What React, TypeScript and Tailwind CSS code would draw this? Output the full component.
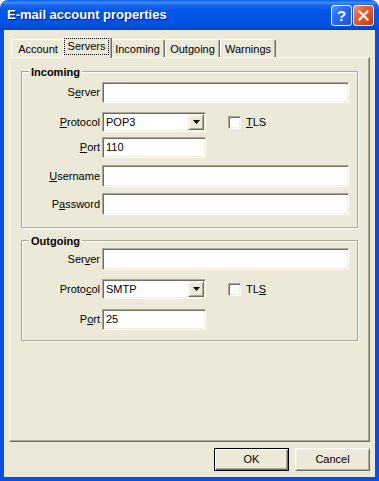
import React from "react";

/* ================= PIECES ================= */

const sunken =
  "border border-t-[#ACA899] border-l-[#ACA899] border-b-white border-r-white shadow-[inset_1px_1px_0_#716F64,inset_-1px_-1px_0_#F1EFE2]";

function Edit({ w, h, value, className = "" }: { w: string; h: string; value?: string; className?: string }) {
  return (
    <div className={`${w} ${h} ${sunken} bg-white flex items-center pl-[3px] ${className}`}>
      {value}
    </div>
  );
}

function Combo({ value, className = "" }: { value: string; className?: string }) {
  return (
    <div className={`w-[104px] h-[20px] ${sunken} bg-white flex items-stretch p-[1px] ${className}`}>
      <div className="flex-1 flex items-center pl-[2px]">{value}</div>
      <div className="w-[16px] bg-[#ECE9D8] border border-t-[#F1EFE2] border-l-[#F1EFE2] border-b-[#716F64] border-r-[#716F64] shadow-[inset_1px_1px_0_#fff,inset_-1px_-1px_0_#ACA899] flex items-center justify-center">
        <svg width="7" height="4" viewBox="0 0 7 4">
          <path d="M0 0h7L3.5 4z" fill="#000" />
        </svg>
      </div>
    </div>
  );
}

function Check({ label }: { label: React.ReactNode }) {
  return (
    <div className="flex items-center ml-[22px]">
      <div className={`w-[13px] h-[13px] ${sunken} bg-white`} />
      <span className="ml-[5px]">{label}</span>
    </div>
  );
}

function Row({ label, children, className = "" }: { label: React.ReactNode; children: React.ReactNode; className?: string }) {
  return (
    <div className={`flex items-center ${className}`}>
      <div className="w-[78px] text-right">{label}</div>
      <div className="ml-[2px] flex items-center">{children}</div>
    </div>
  );
}

function Group({ title, children, className = "" }: { title: string; children: React.ReactNode; className?: string }) {
  return (
    <div
      className={`relative ml-[11px] w-[337px] border border-[#ACA899] shadow-[inset_1px_1px_0_#fff,1px_1px_0_#fff] flex flex-col ${className}`}
    >
      <span className="absolute -top-[6px] left-[7px] px-[2px] bg-[#ECE9D8] font-bold leading-[13px]">
        {title}
      </span>
      {children}
    </div>
  );
}

const U = ({ children }: { children: React.ReactNode }) => <span className="underline underline-offset-[1px]">{children}</span>;

function Tab({ label, w, selected }: { label: string; w: string; selected?: boolean }) {
  if (selected) {
    return (
      <div
        className={`${w} h-[21px] -mx-[2px] -mb-px relative z-10 bg-[#ECE9D8] rounded-t-[2px] border-l border-t border-r border-l-white border-t-white border-r-[#716F64] shadow-[inset_-1px_0_0_#ACA899] flex`}
      >
        <div className="mt-[0px] ml-[0px] mr-[2px] h-[17px] flex-1 border border-dotted border-black flex items-center justify-center">
          {label}
        </div>
      </div>
    );
  }
  return (
    <div
      className={`${w} h-[18px] bg-[#ECE9D8] rounded-t-[2px] border-l border-t border-r border-l-white border-t-white border-r-[#716F64] shadow-[inset_-1px_0_0_#ACA899] flex items-center justify-center pt-[1px]`}
    >
      {label}
    </div>
  );
}

function PushButton({ children, isDefault }: { children: React.ReactNode; isDefault?: boolean }) {
  return (
    <div
      className={
        isDefault
          ? "w-[75px] h-[23px] flex items-center justify-center border border-black bg-[#ECE9D8] shadow-[inset_1px_1px_0_#fff,inset_-1px_-1px_0_#716F64,inset_-2px_-2px_0_#ACA899]"
          : "w-[75px] h-[23px] flex items-center justify-center border border-t-white border-l-white border-b-[#716F64] border-r-[#716F64] bg-[#ECE9D8] shadow-[inset_1px_1px_0_#F1EFE2,inset_-1px_-1px_0_#ACA899]"
      }
    >
      {children}
    </div>
  );
}

/* ================= TITLE BAR ================= */

function TitleBar() {
  return (
    <div className="h-[30px] rounded-t-[8px] flex items-start bg-[linear-gradient(to_bottom,#0A5BE5_0%,#3D8FF9_9%,#2168EE_16%,#0058E8_35%,#0054E3_70%,#0051DC_88%,#0040CF_100%)]">
      <div className="mt-[7px] ml-[7px] text-[13px] font-bold text-white leading-[16px] [text-shadow:1px_1px_0_#0A2080]">
        E-mail account properties
      </div>
      <div className="ml-auto mt-[5px] mr-[5px] flex gap-[1px]">
        <div className="w-[21px] h-[21px] rounded-[3px] border border-white bg-[linear-gradient(135deg,#5A96FA_0%,#2C6CF0_35%,#1C55DC_100%)] flex items-center justify-center text-white font-bold text-[15px] leading-none">
          ?
        </div>
        <div className="w-[21px] h-[21px] rounded-[3px] border border-white bg-[linear-gradient(135deg,#F0987A_0%,#E2623C_35%,#C33C17_100%)] flex items-center justify-center">
          <svg width="11" height="11" viewBox="0 0 11 11">
            <path d="M1.5 1.5l8 8M9.5 1.5l-8 8" stroke="#fff" strokeWidth="2.2" strokeLinecap="square" />
          </svg>
        </div>
      </div>
    </div>
  );
}

/* ================= UI ================= */

export default function App() {
  return (
    <div className="w-[379px] h-[481px] flex flex-col font-['Liberation_Sans',Arial,sans-serif] text-[11px] leading-[13px] text-black bg-white">
      <TitleBar />

      <div className="flex-1 flex flex-col bg-[#ECE9D8] border-x-4 border-b-4 border-[#0A4FE3] px-[5px]">
        {/* TABS */}
        <div className="flex items-end pt-[7px] pl-[2px] h-[27px]">
          <Tab label="Account" w="w-[54px]" />
          <Tab label="Servers" w="w-[49px]" selected />
          <Tab label="Incoming" w="w-[55px]" />
          <Tab label="Outgoing" w="w-[55px]" />
          <Tab label="Warnings" w="w-[56px]" />
        </div>

        {/* PANEL */}
        <div className="h-[385px] flex flex-col border border-t-white border-l-white border-r-[#716F64] border-b-[#716F64] shadow-[inset_-1px_-1px_0_#ACA899]">
          <Group title="Incoming" className="mt-[13px] pb-[12px]">
            <Row label={<>S<U>e</U>rver</>} className="mt-[10px]">
              <Edit w="w-[247px]" h="h-[21px]" />
            </Row>
            <Row label={<><U>P</U>rotocol</>} className="mt-[9px]">
              <Combo value="POP3" />
              <Check label={<><U>T</U>LS</>} />
            </Row>
            <Row label={<><U>P</U>ort</>} className="mt-[5px]">
              <Edit w="w-[104px]" h="h-[21px]" value="110" />
            </Row>
            <Row label={<><U>U</U>sername</>} className="mt-[7px]">
              <Edit w="w-[247px]" h="h-[22px]" />
            </Row>
            <Row label={<>P<U>a</U>ssword</>} className="mt-[6px]">
              <Edit w="w-[247px]" h="h-[22px]" />
            </Row>
          </Group>

          <Group title="Outgoing" className="mt-[12px] pb-[10px]">
            <Row label={<>Ser<U>v</U>er</>} className="mt-[7px]">
              <Edit w="w-[247px]" h="h-[22px]" />
            </Row>
            <Row label={<>Proto<U>c</U>ol</>} className="mt-[9px]">
              <Combo value="SMTP" />
              <Check label={<>TL<U>S</U></>} />
            </Row>
            <Row label={<>P<U>o</U>rt</>} className="mt-[10px]">
              <Edit w="w-[104px]" h="h-[21px]" value="25" />
            </Row>
          </Group>
        </div>

        {/* BUTTONS */}
        <div className="flex justify-end gap-[6px] mt-[6px]">
          <PushButton isDefault>OK</PushButton>
          <PushButton>Cancel</PushButton>
        </div>
      </div>
    </div>
  );
}
